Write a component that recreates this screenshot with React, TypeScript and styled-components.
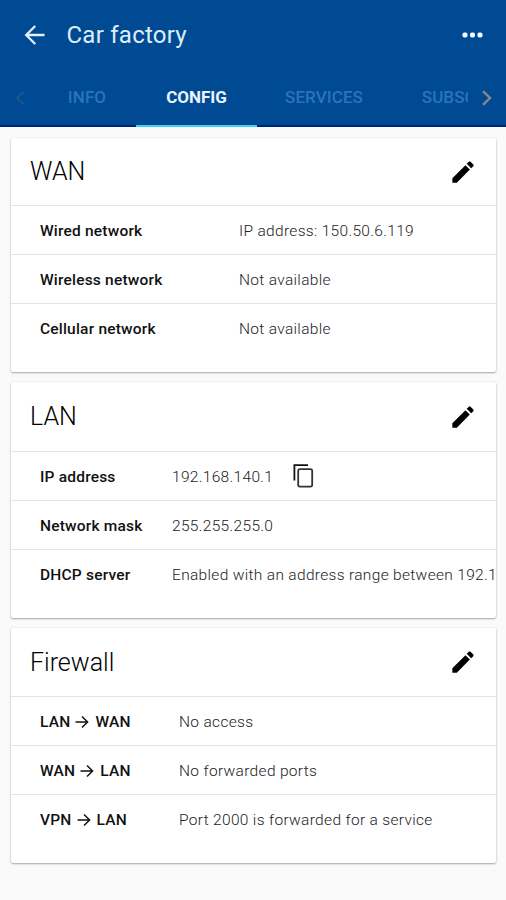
import React from "react";
import styled, { createGlobalStyle } from "styled-components";

const GlobalStyle = createGlobalStyle`
  * { box-sizing: border-box; }
  body {
    margin: 0;
    background: #fafafa;
    font-family: Roboto, "Liberation Sans", sans-serif;
    color: #000;
    overflow: hidden;
  }
`;

const Screen = styled.div`
  width: 506px;
  height: 900px;
  overflow: hidden;
  background: #fafafa;
`;

const Header = styled.header`
  height: 127px;
  background: #004a93;
`;

const TitleBar = styled.div`
  height: 70px;
  padding: 0 22px 0 23px;
  display: flex;
  align-items: center;
`;

const PageTitle = styled.h1`
  flex: 1;
  margin: 0 0 0 19.5px;
  font-size: 24px;
  font-weight: 400;
  line-height: 32px;
  letter-spacing: 0.25px;
  color: #dfecfa;
`;

const IconButton = styled.button`
  display: flex;
  padding: 0;
  border: 0;
  background: none;
  color: #000;
`;

const TabStrip = styled.nav`
  height: 57px;
  display: flex;
`;

const Pager = styled.div<{ $end?: boolean }>`
  width: 38px;
  flex: none;
  padding-left: ${(p) => (p.$end ? "12px" : "14px")};
  padding-top: 20px;
  border-bottom: 2px solid #00237c;
`;

const TabList = styled.div`
  flex: 1;
  min-width: 0;
  display: flex;
  overflow: hidden;
`;

const Tab = styled.div<{ $width: number; $active?: boolean }>`
  flex: none;
  width: ${(p) => p.$width}px;
  text-align: center;
  font-size: 17px;
  line-height: 54px;
  font-weight: ${(p) => (p.$active ? 700 : 500)};
  letter-spacing: ${(p) => (p.$active ? "0" : "0.1px")};
  color: ${(p) => (p.$active ? "#eaf4ff" : "#2a74bd")};
  border-bottom: ${(p) => (p.$active ? "2px solid #3fd0fa" : "2px solid #00237c")};
`;

const Cards = styled.main`
  padding: 11px 10px 0 11px;
  display: flex;
  flex-direction: column;
  gap: 10px;
`;

const Card = styled.section<{ $height: number }>`
  height: ${(p) => p.$height}px;
  background: #fff;
  border-radius: 2px;
  overflow: hidden;
  box-shadow: 0 1px 2px rgba(0, 0, 0, 0.32), 0 0 2px rgba(0, 0, 0, 0.1);
`;

const CardHead = styled.div<{ $height: number }>`
  height: ${(p) => p.$height}px;
  padding: 0 20px 0 19px;
  display: flex;
  align-items: center;
  justify-content: space-between;
`;

const CardTitle = styled.h2`
  margin: 0;
  padding-top: 1px;
  font-size: 25px;
  line-height: 32px;
  font-weight: 300;
  color: #000;
`;

const Row = styled.div<{ $labelWidth: number }>`
  height: 49px;
  padding-left: 29px;
  display: grid;
  grid-template-columns: ${(p) => p.$labelWidth}px 1fr;
  align-items: center;
  border-top: 1px solid #e4e4e4;
  white-space: nowrap;
`;

const Label = styled.div`
  display: flex;
  align-items: center;
  font-size: 15.5px;
  line-height: 20px;
  padding-top: 1px;
  font-weight: 500;
  letter-spacing: 0.2px;
  color: #111;
`;

const Value = styled.div`
  display: flex;
  align-items: center;
  gap: 20px;
  font-size: 15.5px;
  line-height: 20px;
  padding-top: 1px;
  font-weight: 300;
  letter-spacing: 0.32px;
  color: #222;
`;

const Copy = styled.span`
  display: flex;
  margin: -4px 0 -2px;
`;

const Arrow = styled.svg`
  margin: 0 6px 0 5px;
`;

const BackIcon = () => (
  <svg width="24" height="24" viewBox="0 0 24 24" fill="none" stroke="#e2effc" strokeWidth="2.3">
    <path d="M21.5 12H3.5M12.2 3L3.2 12l9 9" />
  </svg>
);

const MoreIcon = () => (
  <svg width="22" height="8" viewBox="0 0 22 8" fill="#f4f8ff">
    <rect x="0.5" y="1.5" width="5" height="5" rx="1.8" />
    <rect x="8" y="1.5" width="5" height="5" rx="1.8" />
    <rect x="15.5" y="1.5" width="5" height="5" rx="1.8" />
  </svg>
);

const Chevron = ({ right }: { right?: boolean }) => (
  <svg
    width="14"
    height="16"
    viewBox="0 0 14 16"
    fill="none"
    stroke={right ? "#8d8585" : "#285b8e"}
    strokeWidth={right ? 2.4 : 1.6}
  >
    <path d={right ? "M3 1.2L10 8l-7 6.8" : "M9.5 2L3 8l6.5 6"} />
  </svg>
);

const PencilIcon = () => (
  <svg width="26" height="26" viewBox="1 1 22 22" fill="#000">
    <path d="M3 17.25V21h3.75L17.81 9.94l-3.75-3.75L3 17.25zM20.71 7.04a1 1 0 0 0 0-1.41l-2.34-2.34a1 1 0 0 0-1.41 0l-1.83 1.83 3.75 3.75 1.83-1.83z" />
  </svg>
);

const CopyIcon = () => (
  <svg width="22" height="26" viewBox="0 0 22 26" fill="none">
    <path d="M1.4 17.5V2.2H15" stroke="#111" strokeWidth="1.8" />
    <rect x="5.2" y="6.2" width="14" height="17.4" rx="1.8" stroke="#333" strokeWidth="1.8" />
  </svg>
);

const ArrowIcon = () => (
  <Arrow width="14" height="14" viewBox="0 0 14 14" fill="none" stroke="#111" strokeWidth="1.5">
    <path d="M0.5 7H12.3M7 1.5L12.6 7 7 12.5" />
  </Arrow>
);

type Entry = { label: string; to?: string; value: string; copy?: boolean };
type Section = { title: string; height: number; head: number; column: number; entries: Entry[] };

const sections: Section[] = [
  {
    title: "WAN",
    height: 234,
    head: 67,
    column: 199,
    entries: [
      { label: "Wired network", value: "IP address: 150.50.6.119" },
      { label: "Wireless network", value: "Not available" },
      { label: "Cellular network", value: "Not available" },
    ],
  },
  {
    title: "LAN",
    height: 236,
    head: 69,
    column: 132,
    entries: [
      { label: "IP address", value: "192.168.140.1", copy: true },
      { label: "Network mask", value: "255.255.255.0" },
      { label: "DHCP server", value: "Enabled with an address range between 192.168.140.100" },
    ],
  },
  {
    title: "Firewall",
    height: 235,
    head: 68,
    column: 139,
    entries: [
      { label: "LAN", to: "WAN", value: "No access" },
      { label: "WAN", to: "LAN", value: "No forwarded ports" },
      { label: "VPN", to: "LAN", value: "Port 2000 is forwarded for a service" },
    ],
  },
];

export default function App() {
  return (
    <Screen>
      <GlobalStyle />
      <Header>
        <TitleBar>
          <IconButton aria-label="Back">
            <BackIcon />
          </IconButton>
          <PageTitle>Car factory</PageTitle>
          <IconButton aria-label="More">
            <MoreIcon />
          </IconButton>
        </TitleBar>
        <TabStrip>
          <Pager>
            <Chevron />
          </Pager>
          <TabList>
            <Tab $width={98}>INFO</Tab>
            <Tab $width={121} $active>
              CONFIG
            </Tab>
            <Tab $width={134}>SERVICES</Tab>
            <Tab $width={173}>SUBSCRIBERS</Tab>
          </TabList>
          <Pager $end>
            <Chevron right />
          </Pager>
        </TabStrip>
      </Header>
      <Cards>
        {sections.map((s) => (
          <Card key={s.title} $height={s.height}>
            <CardHead $height={s.head}>
              <CardTitle>{s.title}</CardTitle>
              <IconButton aria-label={`Edit ${s.title}`}>
                <PencilIcon />
              </IconButton>
            </CardHead>
            {s.entries.map((e) => (
              <Row key={e.label} $labelWidth={s.column}>
                <Label>
                  {e.label}
                  {e.to && <ArrowIcon />}
                  {e.to}
                </Label>
                <Value>
                  {e.value}
                  {e.copy && (
                    <Copy>
                      <CopyIcon />
                    </Copy>
                  )}
                </Value>
              </Row>
            ))}
          </Card>
        ))}
      </Cards>
    </Screen>
  );
}
